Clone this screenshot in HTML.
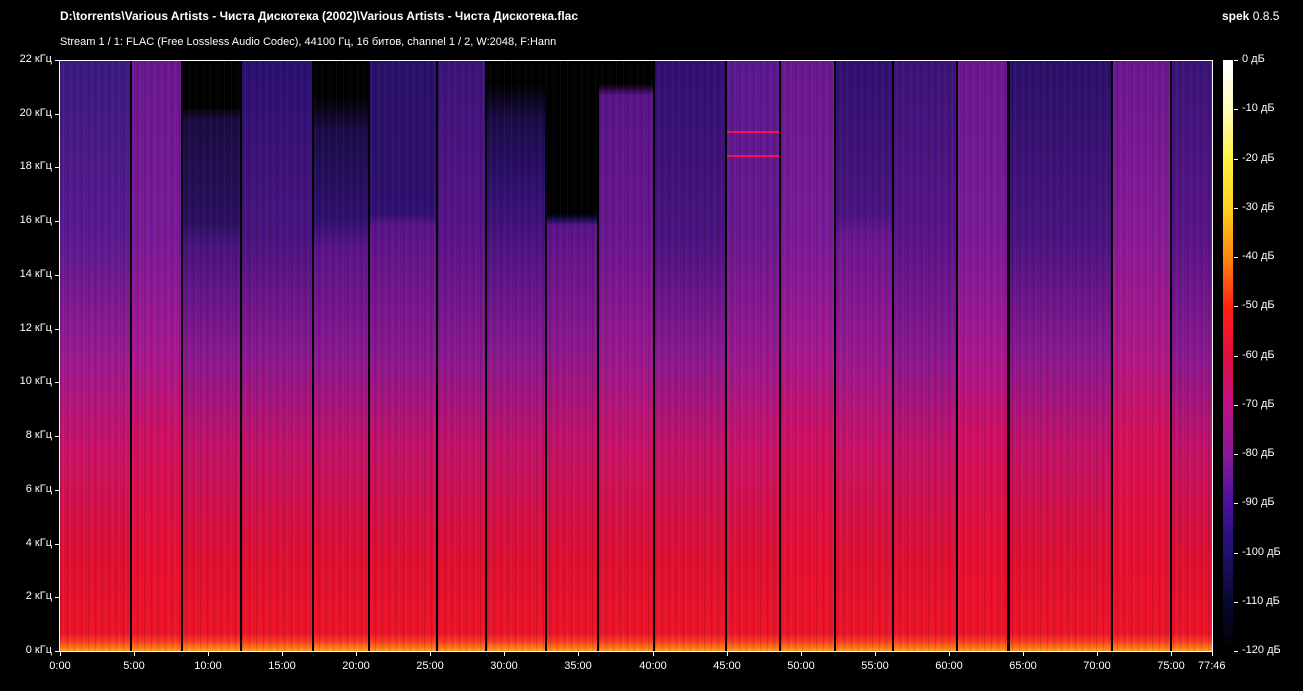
<!DOCTYPE html>
<html><head><meta charset="utf-8"><style>
body{margin:0;background:#000;width:1303px;height:691px;overflow:hidden;font-family:"Liberation Sans",sans-serif;color:#fff;position:relative}
.t{position:absolute;white-space:nowrap;font-size:11px}
#plot{position:absolute;left:60px;top:60px;width:1152px;height:591px;overflow:hidden;background:#000}
.tr{position:absolute;top:0;height:591px}
.tex{position:absolute;inset:0;background:repeating-linear-gradient(90deg,rgba(0,0,0,.12) 0 1px,rgba(0,0,0,0) 1px 3px,rgba(255,255,255,.04) 3px 4px,rgba(0,0,0,0) 4px 7px)}
.ax{position:absolute;background:#fff}
</style></head><body>
<div class="t" style="left:60px;top:9px;font-size:12px;font-weight:bold">D:\torrents\Various Artists - Чиста Дискотека (2002)\Various Artists - Чиста Дискотека.flac</div>
<div class="t" style="left:1222px;top:9px;font-size:12px"><b>spek</b> 0.8.5</div>
<div class="t" style="left:60px;top:36px">Stream 1 / 1: FLAC (Free Lossless Audio Codec), 44100 Гц, 16 битов, channel 1 / 2, W:2048, F:Hann</div>
<div id="plot">
<div class="tr" style="left:0;width:70px;background:linear-gradient(#3a1a80,#5a1a90 30%,#9a1a90 50%,#c8126a 65%,#e01030 85%,#ec1428 97%,#f84020 98.5%,#ff9a18)"></div>
<div class="tr" style="left:72px;width:49px;background:linear-gradient(#6a1890,#7a1a98 30%,#a81890 50%,#d01060 65%,#e81030 85%,#ec1428 97%,#f84020 98.5%,#ff9a18)"></div>
<div class="tr" style="left:123px;width:57px;background:linear-gradient(#000 0,#000 8%,#1a0c40 10%,#2a1060 27%,#4a1480 32%,#8a1890 50%,#c0126a 65%,#e01030 85%,#ec1428 97%,#f84020 98.5%,#ffa018)"></div>
<div class="tr" style="left:182px;width:70px;background:linear-gradient(#2a1070,#4a1480 30%,#8a1890 50%,#c0126a 65%,#e01030 85%,#ec1428 97%,#f84020 98.5%,#ff9a18)"></div>
<div class="tr" style="left:254px;width:54px;background:linear-gradient(#000 0,#000 6%,#1a0c48 12%,#301070 27%,#5a1488 32%,#8a1890 50%,#c0126a 65%,#e01030 85%,#ec1428 97%,#f84020 98.5%,#ffa018)"></div>
<div class="tr" style="left:310px;width:66px;background:linear-gradient(#2a1068,#301070 26%,#5a1488 28%,#8a1890 50%,#c0126a 65%,#e01030 85%,#ec1428 97%,#f84020 98.5%,#ff9a18)"></div>
<div class="tr" style="left:378px;width:47px;background:linear-gradient(#3a1478,#5a1488 30%,#8a1890 50%,#c0126a 65%,#e01030 85%,#ec1428 97%,#f84020 98.5%,#ff9a18)"></div>
<div class="tr" style="left:427px;width:58px;background:linear-gradient(#000 0,#000 4%,#1a0c48 10%,#301070 22%,#5a1488 35%,#8a1890 50%,#c0126a 65%,#e01030 85%,#ec1428 97%,#f84020 98.5%,#ffa018)"></div>
<div class="tr" style="left:487px;width:50px;background:linear-gradient(#000 0,#000 26%,#1a0c50 27%,#5a1488 28%,#8a1890 48%,#c0126a 64%,#e01030 85%,#ec1428 97%,#f84020 98.5%,#ff9a18)"></div>
<div class="tr" style="left:539px;width:54px;background:linear-gradient(#000 0,#000 4%,#5a1488 6%,#6a1690 30%,#9a1890 50%,#c8126a 65%,#e01030 85%,#ec1428 97%,#f84020 98.5%,#ff9a18)"></div>
<div class="tr" style="left:595px;width:70px;background:linear-gradient(#301070,#4a1480 30%,#8a1890 50%,#c0126a 65%,#e01030 85%,#ec1428 97%,#f84020 98.5%,#ff9a18)"></div>
<div class="tr" style="left:667px;width:52px;background:linear-gradient(#5a1890,#6a1890 30%,#9a1890 50%,#c8126a 65%,#e01030 85%,#ec1428 97%,#f84020 98.5%,#ff9a18)"></div>
<div class="tr" style="left:721px;width:53px;background:linear-gradient(#6a1890,#7a1a98 30%,#a81890 50%,#d01060 65%,#e81030 85%,#ec1428 97%,#f84020 98.5%,#ff9a18)"></div>
<div class="tr" style="left:776px;width:56px;background:linear-gradient(#301070,#4a1480 26%,#6a1690 30%,#9a1890 50%,#c8126a 65%,#e01030 85%,#ec1428 97%,#f84020 98.5%,#ff9a18)"></div>
<div class="tr" style="left:834px;width:62px;background:linear-gradient(#3a1478,#5a1488 30%,#8a1890 50%,#c0126a 65%,#e01030 85%,#ec1428 97%,#f84020 98.5%,#ff9a18)"></div>
<div class="tr" style="left:898px;width:49px;background:linear-gradient(#6a1890,#7a1a98 30%,#a81890 50%,#d01060 65%,#e81030 85%,#ec1428 97%,#f84020 98.5%,#ff9a18)"></div>
<div class="tr" style="left:950px;width:101px;background:linear-gradient(#2a1068,#4a1480 30%,#8a1890 50%,#c0126a 65%,#e01030 85%,#ec1428 97%,#f84020 98.5%,#ff9a18)"></div>
<div class="tr" style="left:1053px;width:57px;background:linear-gradient(#6a1890,#8a1a98 30%,#b01888 50%,#d81058 65%,#e81030 85%,#ec1428 97%,#f84020 98.5%,#ff9a18)"></div>
<div class="tr" style="left:1112px;width:40px;background:linear-gradient(#3a1478,#5a1488 30%,#8a1890 50%,#c0126a 65%,#e01030 85%,#ec1428 97%,#f84020 98.5%,#ff9a18)"></div>
<div style="position:absolute;left:667px;width:52px;top:71px;height:2px;background:#ff1050"></div>
<div style="position:absolute;left:667px;width:52px;top:95px;height:2px;background:#ff1050"></div>
<div class="tex"></div>
</div>
<div class="ax" style="left:59px;top:60px;width:1px;height:592px"></div>
<div class="ax" style="left:59px;top:60px;width:1154px;height:1px"></div>
<div class="ax" style="left:1212px;top:60px;width:1px;height:592px"></div>
<div class="ax" style="left:59px;top:651px;width:1154px;height:1px"></div>
<div style="position:absolute;left:1223px;top:60px;width:10px;height:591px;background:linear-gradient(#fff,#fffac0 8%,#fff040 17%,#ffd020 25%,#ff8010 34%,#ff2010 42%,#e01040 50%,#c01080 58%,#8a1898 67%,#4a10a0 75%,#201070 83%,#080830 92%,#000)"></div>
<div id="lab"></div>
<script>
var h='';
for(var i=0;i<=11;i++){var y=651-i*53.73;h+='<div class="ax" style="left:55px;top:'+Math.round(y)+'px;width:4px;height:1px"></div><div class="t" style="right:1251px;top:'+Math.round(y-7)+'px">'+(i*2)+' кГц</div>';}
for(var i=0;i<=12;i++){var y=60+i*49.25;h+='<div class="ax" style="left:1234px;top:'+Math.round(y)+'px;width:4px;height:1px"></div><div class="t" style="left:1242px;top:'+Math.round(y-7)+'px">'+(i?'-'+i*10:'0')+' дБ</div>';}
for(var i=0;i<=15;i++){var x=60+i*74.07;var m=i*5;h+='<div class="ax" style="left:'+Math.round(x)+'px;top:652px;width:1px;height:4px"></div><div class="t" style="left:'+Math.round(x-20)+'px;width:40px;text-align:center;top:660px">'+m+':00</div>';}
h+='<div class="ax" style="left:1212px;top:652px;width:1px;height:4px"></div><div class="t" style="left:1198px;top:660px">77:46</div>';
document.getElementById('lab').innerHTML=h;
</script>
</body></html>
